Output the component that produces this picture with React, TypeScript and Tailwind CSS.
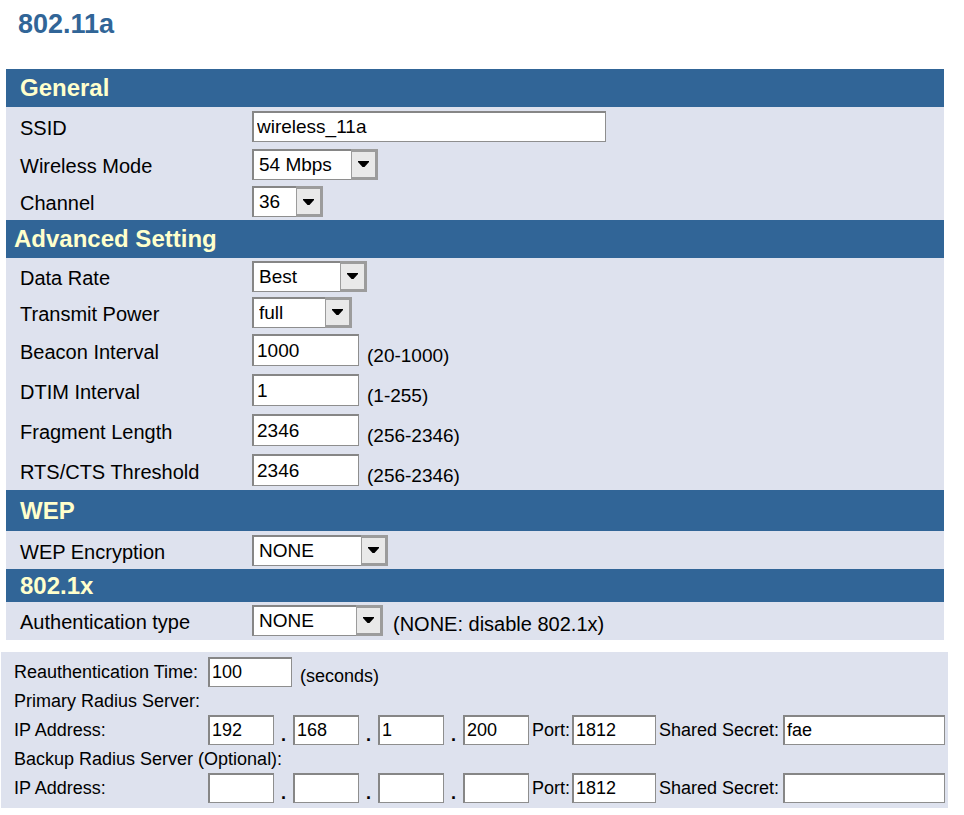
import { clsx } from "clsx";
import type { ReactNode } from "react";

const FIELD =
  "border-t-2 border-l-2 border-r border-b border-r-[#8e8e8e] border-b-[#8e8e8e] border-t-[#868686] border-l-[#868686] bg-white text-black outline-none";

function SectionHeader({ className, children }: { className: string; children: ReactNode }) {
  return (
    <h2
      className={clsx(
        "flex items-center bg-[#316597] text-[24px] leading-[28px] font-bold text-[#ffffcc]",
        className
      )}
    >
      {children}
    </h2>
  );
}

type RowProps = {
  id: string;
  label: string;
  className?: string;
  children: ReactNode;
};

function Row({ id, label, className = "h-[38px]", children }: RowProps) {
  return (
    <div className={clsx("flex items-center", className)}>
      <label htmlFor={id} className="w-[246px] shrink-0 pt-[3px] pl-[14px]">
        {label}
      </label>
      {children}
    </div>
  );
}

function Select({ id, options, className }: { id: string; options: string[]; className: string }) {
  return (
    <div className={clsx("relative h-[31px]", className)}>
      <select
        id={id}
        defaultValue={options[0]}
        className={clsx(FIELD, "h-full w-full appearance-none pl-[5px] text-[19px] leading-[24px]")}
      >
        {options.map((option) => (
          <option key={option}>{option}</option>
        ))}
      </select>
      <span
        className="pointer-events-none absolute inset-y-0 right-0 flex w-[27px] items-center justify-center border-t-[3px] border-r-[3px] border-b-[3px] border-l border-[#9c9c9c] bg-[#e9e9e9]"
        aria-hidden
      >
        <svg width="11" height="6" viewBox="0 0 11 6">
          <path d="M0 0H11V1L6.5 6H4.5L0 1Z" fill="#000" />
        </svg>
      </span>
    </div>
  );
}

function NumberRow({ id, label, value, hint }: { id: string; label: string; value: string; hint: string }) {
  return (
    <Row id={id} label={label} className="h-[40px]">
      <input
        id={id}
        type="text"
        defaultValue={value}
        className={clsx(FIELD, "h-[32px] w-[107px] pl-[3px] text-[19px]")}
      />
      <span className="pt-3 pl-2 text-[19px]">{hint}</span>
    </Row>
  );
}

type RadiusServerProps = {
  id: string;
  title: string;
  octets: string[];
  port: string;
  secret: string;
};

function RadiusServer({ id, title, octets, port, secret }: RadiusServerProps) {
  return (
    <fieldset className="min-w-0">
      <legend className="h-[28px] pl-[13px] leading-[28px]">{title}</legend>
      <div className="flex h-[30px] items-center">
        <label htmlFor={`${id}-ip-0`} className="w-[207px] shrink-0 pl-[13px]">
          IP Address:
        </label>
        {octets.map((octet, i) => (
          <div key={i} className="flex shrink-0 items-end">
            {i > 0 && <span className="w-[19px] text-center leading-[20px] font-bold">.</span>}
            <input
              id={`${id}-ip-${i}`}
              type="text"
              defaultValue={octet}
              aria-label={`${title} IP address part ${i + 1}`}
              className={clsx(FIELD, "h-[30px] w-[66px] pl-[2px]")}
            />
          </div>
        ))}
        <label htmlFor={`${id}-port`} className="w-[43px] shrink-0 pl-[3px]">
          Port:
        </label>
        <input
          id={`${id}-port`}
          type="text"
          defaultValue={port}
          className={clsx(FIELD, "h-[30px] w-[84px] shrink-0 pl-[2px]")}
        />
        <label htmlFor={`${id}-secret`} className="w-[127px] shrink-0 pl-[3px]">
          Shared Secret:
        </label>
        <input
          id={`${id}-secret`}
          type="text"
          defaultValue={secret}
          className={clsx(FIELD, "mr-[3px] h-[30px] min-w-0 flex-1 pl-[2px]")}
        />
      </div>
    </fieldset>
  );
}

export default function App() {
  return (
    <main className="min-h-screen bg-white pb-[7px] font-['Liberation_Sans',Arial,sans-serif] text-black">
      <h1 className="pt-[10px] pb-[31px] pl-[18px] text-[27px] leading-[28px] font-bold text-[#316597]">
        802.11a
      </h1>

      <form>
        <div className="mr-[20px] ml-[6px] bg-[#dee2ee] pb-[2px] text-[20px] leading-[24px]">
          <SectionHeader className="h-[38px] pl-[14px]">General</SectionHeader>
          <Row id="ssid" label="SSID">
            <input
              id="ssid"
              type="text"
              defaultValue="wireless_11a"
              className={clsx(FIELD, "h-[31px] w-[354px] pl-[3px] text-[19px]")}
            />
          </Row>
          <Row id="mode" label="Wireless Mode">
            <Select id="mode" options={["54 Mbps", "108 Mbps"]} className="w-[126px]" />
          </Row>
          <Row id="channel" label="Channel" className="h-[37px]">
            <Select id="channel" options={["36", "40", "44", "48"]} className="w-[71px]" />
          </Row>

          <SectionHeader className="h-[38px] pl-[8px]">Advanced Setting</SectionHeader>
          <Row id="rate" label="Data Rate" className="h-[36px]">
            <Select id="rate" options={["Best", "54", "48", "36"]} className="w-[115px]" />
          </Row>
          <Row id="power" label="Transmit Power" className="h-[36px]">
            <Select id="power" options={["full", "half", "min"]} className="w-[100px]" />
          </Row>
          <NumberRow id="beacon" label="Beacon Interval" value="1000" hint="(20-1000)" />
          <NumberRow id="dtim" label="DTIM Interval" value="1" hint="(1-255)" />
          <NumberRow id="fragment" label="Fragment Length" value="2346" hint="(256-2346)" />
          <NumberRow id="rts" label="RTS/CTS Threshold" value="2346" hint="(256-2346)" />

          <SectionHeader className="h-[41px] pl-[14px]">WEP</SectionHeader>
          <Row id="wep" label="WEP Encryption">
            <Select id="wep" options={["NONE", "64 bits", "128 bits"]} className="w-[136px]" />
          </Row>

          <SectionHeader className="h-[33px] pl-[14px]">802.1x</SectionHeader>
          <Row id="auth" label="Authentication type" className="h-[36px]">
            <Select id="auth" options={["NONE", "TLS", "MD5"]} className="w-[131px]" />
            <span className="pt-2 pl-[10px]">(NONE: disable 802.1x)</span>
          </Row>
        </div>

        <div className="mt-[12px] mr-[16px] ml-px bg-[#dee2ee] py-[5px] text-[18px] leading-[24px]">
          <div className="flex h-[30px] items-center">
            <label htmlFor="reauth" className="w-[207px] shrink-0 pl-[13px]">
              Reauthentication Time:
            </label>
            <input
              id="reauth"
              type="text"
              defaultValue="100"
              className={clsx(FIELD, "h-[30px] w-[84px] pl-[2px]")}
            />
            <span className="pt-2 pl-2">(seconds)</span>
          </div>
          <RadiusServer
            id="primary"
            title="Primary Radius Server:"
            octets={["192", "168", "1", "200"]}
            port="1812"
            secret="fae"
          />
          <RadiusServer
            id="backup"
            title="Backup Radius Server (Optional):"
            octets={["", "", "", ""]}
            port="1812"
            secret=""
          />
        </div>
      </form>
    </main>
  );
}
